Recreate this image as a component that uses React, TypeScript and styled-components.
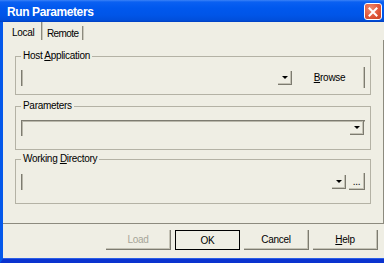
import React from 'react';
import styled, { createGlobalStyle } from 'styled-components';

const GlobalStyle = createGlobalStyle`
  html, body {
    margin: 0;
    padding: 0;
  }
  body {
    width: 384px;
    height: 263px;
    overflow: hidden;
    background: #efeee4;
    font-family: "Liberation Sans", Arial, sans-serif;
  }
`;

const Window = styled.div`
  width: 384px;
  height: 263px;
  display: flex;
  flex-direction: column;
  background: #efeee4;
  overflow: hidden;
  font-size: 10px;
  letter-spacing: -0.3px;
  color: #000;
`;

const TitleBar = styled.div`
  height: 22px;
  flex: none;
  display: flex;
  align-items: center;
  justify-content: space-between;
  padding: 0 2px 0 7px;
  box-sizing: border-box;
  background: linear-gradient(
    #3b82f7 0,
    #0a60f2 2px,
    #0058ee 8px,
    #0055e8 15px,
    #004fdc 20px,
    #003fc0 22px
  );
`;

const Title = styled.span`
  color: #fff;
  font-weight: bold;
  font-size: 12px;
  letter-spacing: -0.4px;
  margin-top: 1px;
`;

const CloseButton = styled.div`
  width: 18px;
  height: 17px;
  box-sizing: border-box;
  border: 1px solid #fff;
  border-radius: 3px;
  background: radial-gradient(circle at 35% 30%, #f08a6e 0, #e0573a 55%, #c8401f 100%);
  display: flex;
  align-items: center;
  justify-content: center;
  margin-top: 1px;
`;

const Frame = styled.div`
  flex: 1;
  display: flex;
  flex-direction: column;
  border-left: 3px solid #0458ea;
  border-bottom: 4px solid #0a33cf;
  box-shadow: inset 0 -1px #2a5ee6;
  min-height: 0;
`;

const TabStrip = styled.div`
  height: 18px;
  flex: none;
  display: flex;
  align-items: flex-end;
  padding-left: 4px;
`;

const Tab = styled.div<{ $active?: boolean; $w: number }>`
  width: ${p => p.$w}px;
  height: ${p => (p.$active ? 18 : 14)}px;
  box-sizing: border-box;
  padding: ${p => (p.$active ? '5px 0 0 5px' : '2px 0 0 5px')};
  letter-spacing: ${p => (p.$active ? '-0.3px' : '-0.6px')};
  border-right: 1px solid #8c8a7e;
  box-shadow: 1px 0 #c9c7ba;
  line-height: 12px;
`;

const TabPanel = styled.div`
  height: 184px;
  flex: none;
  box-sizing: border-box;
  padding: 10px 12px 0 12px;
  border-right: 1px solid #8c8a7e;
  border-bottom: 1px solid #8c8a7e;
  display: flex;
  flex-direction: column;
`;

const Group = styled.fieldset<{ $h: number; $gap: number }>`
  margin: ${p => p.$gap}px 0 0;
  padding: 0 5px;
  height: ${p => p.$h}px;
  box-sizing: border-box;
  border: 1px solid #b4b2a5;
  min-width: 0;
`;

const Legend = styled.legend`
  padding: 0 2px;
  margin: 0;
  line-height: 12px;
`;

const Row = styled.div<{ $mt: number }>`
  margin-top: ${p => p.$mt}px;
  display: flex;
  align-items: center;
  gap: 2px;
`;

const Combo = styled.div<{ $top?: boolean }>`
  flex: 1;
  height: 16px;
  box-sizing: border-box;
  display: flex;
  justify-content: flex-end;
  align-items: flex-end;
  padding: 0 1px 1px 0;
  border-left: 1px solid #7d7b70;
  border-top: ${p => (p.$top ? '1px solid #7d7b70' : '0')};
  box-shadow: ${p => (p.$top ? 'inset 1px 1px #b9b7aa' : 'inset 1px 0 #b9b7aa')};
`;

const DropButton = styled.div`
  width: 14px;
  height: 14px;
  box-sizing: border-box;
  border-right: 1px solid #7d7b70;
  border-bottom: 1px solid #7d7b70;
  box-shadow: inset -1px -1px #c4c2b5;
  display: flex;
  align-items: center;
  justify-content: center;

  &::after {
    content: '';
    width: 0;
    height: 0;
    border-left: 3px solid transparent;
    border-right: 3px solid transparent;
    border-top: 3px solid #000;
  }
`;

const Button = styled.div<{
  $w: number;
  $h: number;
  $default?: boolean;
  $disabled?: boolean;
  $flat?: boolean;
}>`
  width: ${p => p.$w}px;
  height: ${p => p.$h}px;
  flex: none;
  box-sizing: border-box;
  display: flex;
  align-items: center;
  justify-content: center;
  color: ${p => (p.$disabled ? '#a6a598' : '#000')};
  border: ${p => (p.$default ? '1px solid #000' : '0')};
  border-right: 1px solid ${p => (p.$default ? '#000' : '#7d7b70')};
  border-bottom: ${p => (p.$flat ? '0' : `1px solid ${p.$default ? '#000' : '#7d7b70'}`)};
  box-shadow: ${p => (p.$default ? 'none' : p.$flat ? 'inset -1px 0 #c4c2b5' : 'inset -1px -1px #c4c2b5')};

  u {
    text-decoration: underline;
  }
`;

const Footer = styled.div`
  flex: 1;
  display: flex;
  justify-content: flex-end;
  align-items: flex-start;
  gap: 4px;
  padding: 6px 6px 0 0;
`;

const CloseIcon = () => (
  <svg width="10" height="10" viewBox="0 0 10 10">
    <path d="M1.5 1.5 L8.5 8.5 M8.5 1.5 L1.5 8.5" stroke="#fff" strokeWidth="2" strokeLinecap="square" />
  </svg>
);

export default function App() {
  return (
    <>
      <GlobalStyle />
      <Window>
        <TitleBar>
          <Title>Run Parameters</Title>
          <CloseButton>
            <CloseIcon />
          </CloseButton>
        </TitleBar>
        <Frame>
          <TabStrip>
            <Tab $active $w={35}>Local</Tab>
            <Tab $w={41}>Remote</Tab>
          </TabStrip>
          <TabPanel>
            <Group $h={45} $gap={0}>
              <Legend>
                Host <u>A</u>pplication
              </Legend>
              <Row $mt={5}>
                <Combo>
                  <DropButton />
                </Combo>
                <Button $w={70} $h={21} $flat>
                  <span>
                    <u>B</u>rowse
                  </span>
                </Button>
              </Row>
            </Group>
            <Group $h={50} $gap={5}>
              <Legend>Parameters</Legend>
              <Row $mt={8}>
                <Combo $top>
                  <DropButton />
                </Combo>
              </Row>
            </Group>
            <Group $h={51} $gap={3}>
              <Legend>
                Working <u>D</u>irectory
              </Legend>
              <Row $mt={8}>
                <Combo>
                  <DropButton />
                </Combo>
                <Button $w={16} $h={17}>...</Button>
              </Row>
            </Group>
          </TabPanel>
          <Footer>
            <Button $w={65} $h={20} $disabled>Load</Button>
            <Button $w={65} $h={20} $default>OK</Button>
            <Button $w={65} $h={20}>Cancel</Button>
            <Button $w={65} $h={20}>
              <span>
                <u>H</u>elp
              </span>
            </Button>
          </Footer>
        </Frame>
      </Window>
    </>
  );
}
